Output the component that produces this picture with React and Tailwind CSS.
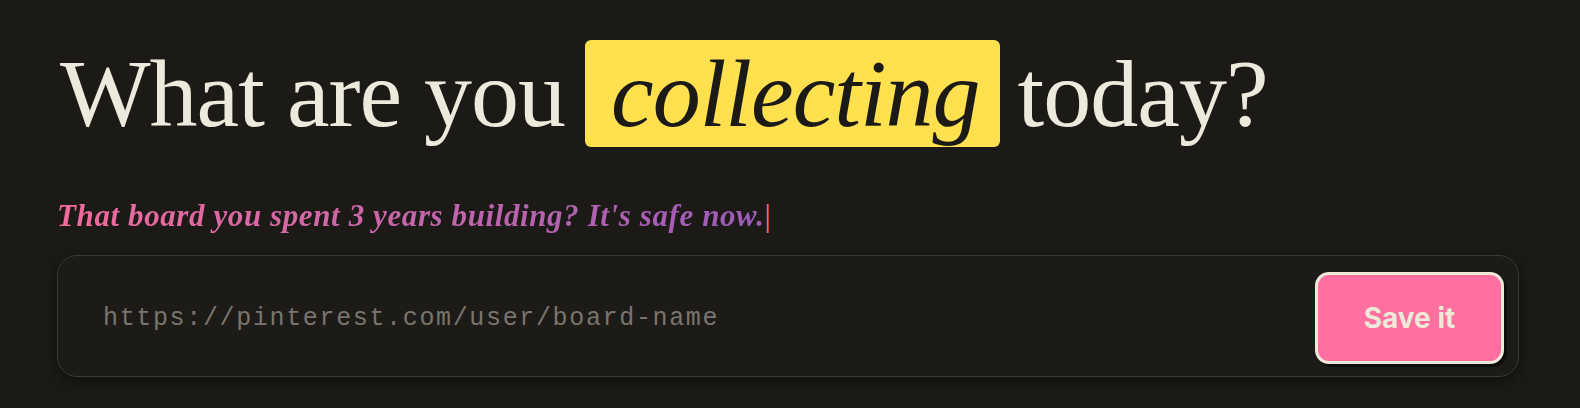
export default function App() {
  return (
    <div className="h-[408px] w-full overflow-hidden bg-[#1c1a17] px-[57px] pt-[40px]">
      <h1
        className="flex items-start whitespace-nowrap text-[96px] leading-[107px] text-[#eee9dd] tracking-[-1px]"
        style={{ fontFamily: '"Liberation Serif", serif' }}
      >
        <span className="pl-[3px]">What are you</span>
        <span className="ml-[20px] mr-[18px] rounded-[6px] bg-[#ffe150] pl-[26px] pr-[20px] italic text-[#1c1a17]">
          collecting
        </span>
        <span>today?</span>
      </h1>

      <p
        className="mt-[52px] whitespace-nowrap text-[31px] font-bold italic leading-[34px] tracking-[0.6px]"
        style={{ fontFamily: '"Liberation Serif", serif' }}
      >
        <span className="bg-gradient-to-r from-[#f26b9c] to-[#9b5bb8] bg-clip-text text-transparent">
          That board you spent 3 years building? It's safe now.
        </span>
        <span className="font-normal not-italic text-[#f26b9c]">|</span>
      </p>

      <div className="mt-[22px] flex h-[122px] w-[1462px] items-center rounded-[20px] border border-[#3b3934] bg-[#1d1b18] pl-[45px] pr-[14px] shadow-[0_4px_14px_rgba(0,0,0,0.45)]">
        <input
          type="text"
          placeholder="https://pinterest.com/user/board-name"
          className="mt-[6px] min-w-0 flex-1 bg-transparent text-[25px] tracking-[1.65px] text-[#eee9dd] outline-none placeholder:text-[#7a756c]"
          style={{ fontFamily: '"Liberation Mono", monospace' }}
        />
        <button
          className="mt-[4px] h-[92px] w-[189px] shrink-0 rounded-[14px] border-[3px] border-[#efe9da] bg-[#ff6f9f] text-[28px] font-bold text-[#efe9da] shadow-[3px_3px_0_#0e0d0b]"
          style={{ fontFamily: 'Inter, sans-serif' }}
        >
          Save it
        </button>
      </div>
    </div>
  );
}
